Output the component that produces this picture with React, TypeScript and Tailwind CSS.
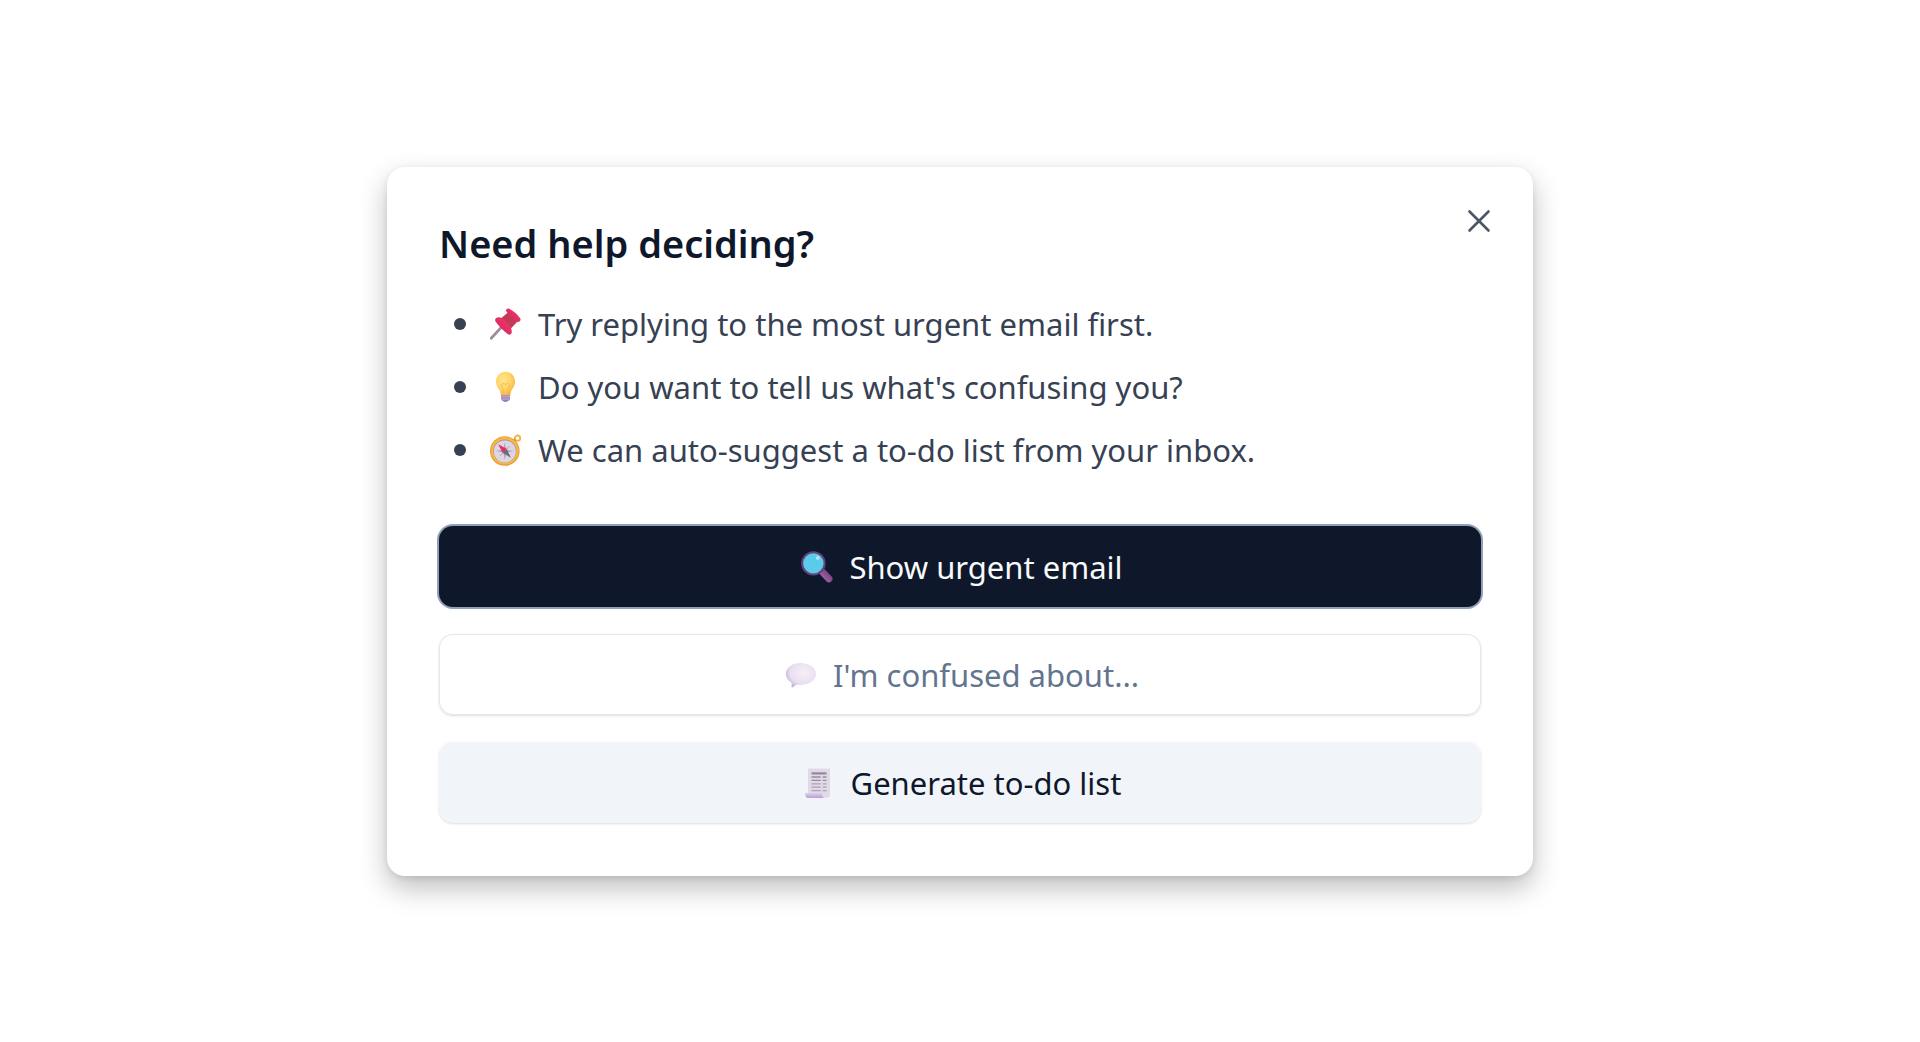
import type { ReactNode } from 'react';

function PinIcon() {
  return (
    <svg viewBox="0 0 32 32" className="size-8 shrink-0" aria-hidden="true">
      <defs>
        <linearGradient id="pin" x1="0" y1="1" x2="1" y2="0">
          <stop offset="0" stopColor="#cf2866" />
          <stop offset="1" stopColor="#fb3566" />
        </linearGradient>
      </defs>
      <path d="M1.200 30.200 11 19.600" stroke="#998da0" strokeWidth="2.800" strokeLinecap="round" />
      <path d="m9 12 9.500-8 9 9.500-8.500 9z" fill="#c13b57" />
      <path d="M19.200.8c-1.600-1.300-4 .8-3 2.500 2.500 3.500 6.200 7.700 10.700 10.400 2 1.100 4.500-1.100 3.400-3.100C27.800 6.600 23.700 3.200 19.200.8z" fill="url(#pin)" />
      <path d="M7.700 9.400c-2 .1-3.500 2.300-2 4.400 3.600 4.800 7.500 9.200 12.300 12.500 2 1.200 4-.4 3.800-2.600-.1-2.300-1-4.400-2.200-5.900-2.200-3-4.900-6.200-8-7.800-1.200-.6-2.500-.8-3.900-.6z" fill="url(#pin)" />
    </svg>
  );
}

function BulbIcon() {
  return (
    <svg viewBox="0 0 32 32" className="size-8 shrink-0" aria-hidden="true">
      <defs>
        <radialGradient id="bulb" cx=".4" cy=".35" r=".7">
          <stop offset="0" stopColor="#ffe58c" />
          <stop offset=".55" stopColor="#ffd468" />
          <stop offset="1" stopColor="#f6ae3d" />
        </radialGradient>
      </defs>
      <path d="M15.500.8C9.900.8 6 5.200 6 10.500c0 4.800 2.900 7.200 4.100 10.200.5 1.200.5 3.300 1 4.100h8.900c.5-.8.500-2.900 1-4.100 1.200-3 4-5.400 4-10.200C25 5.200 21.100.8 15.500.8z" fill="url(#bulb)" />
      <path d="M13.200 24v-6.500c-2.200-.8-2.700-4.600.1-4.900 1.700-.2 2.200 1.200 2.200 1.200s.5-1.400 2.200-1.200c2.800.3 2.300 4.100.1 4.900V24" fill="none" stroke="#f9b94c" strokeWidth="1" />
      <path d="M11 24.300h9v3.500c0 1.200-1.300 2-2.300 2.500-.8 1-3.600 1-4.400 0-1-.5-2.300-1.300-2.300-2.500z" fill="#9b80b8" />
      <path d="M11 25.800h9M11 28h8.500" stroke="#d3bfd9" strokeWidth=".8" />
    </svg>
  );
}

function CompassIcon() {
  return (
    <svg viewBox="0 0 32 32" className="size-8 shrink-0" aria-hidden="true">
      <circle cx="27.500" cy="4.200" r="2.700" fill="none" stroke="#f3b443" strokeWidth="1.800" />
      <path d="m22.500 7.800 3.200-2.200" stroke="#e69a38" strokeWidth="3" />
      <circle cx="14.800" cy="17" r="14.800" fill="#e99a35" />
      <circle cx="14.800" cy="16.700" r="13.800" fill="#f5b943" />
      <circle cx="14.800" cy="17" r="11.600" fill="#ab91a5" />
      <circle cx="14.800" cy="17.400" r="11" fill="#ddd6e1" />
      <path d="m14.800 8.200 1.300 7.600 7.600 1.300-7.600 1.300-1.300 7.600-1.300-7.600-7.600-1.300 7.600-1.300z" fill="#aaa0af" />
      <path d="m10 12.200 9.500 9.600M19.500 12.200 10 21.800" stroke="#aaa0af" strokeWidth="1" />
      <path d="m8.200 10.200 8.300 4.600-3.800 4z" fill="#e62c61" />
      <path d="m20.900 23.700-8.200-4.900 3.800-4z" fill="#71667a" />
    </svg>
  );
}

function MagnifierIcon() {
  return (
    <svg viewBox="0 0 32 32" className="size-8 shrink-0" aria-hidden="true">
      <defs>
        <linearGradient id="handle" x1="1" y1="0" x2="0" y2="1">
          <stop offset="0" stopColor="#70427f" />
          <stop offset="1" stopColor="#a463a3" />
        </linearGradient>
      </defs>
      <path d="m22 21.500 6 6.200" stroke="url(#handle)" strokeWidth="7" strokeLinecap="round" />
      <circle cx="12.400" cy="12.400" r="11.200" fill="#5bcbea" stroke="#66417f" strokeWidth="2" />
      <circle cx="16.800" cy="6.900" r="1.900" fill="#b8e4f5" />
    </svg>
  );
}

function SpeechIcon() {
  return (
    <svg viewBox="0 0 32 32" className="size-8 shrink-0" aria-hidden="true">
      <defs>
        <radialGradient id="speech" cx=".6" cy=".4" r=".65">
          <stop offset="0" stopColor="#f5f0f7" />
          <stop offset=".7" stopColor="#e9dff0" />
          <stop offset="1" stopColor="#c5b3df" />
        </radialGradient>
      </defs>
      <path d="M16 4C7.400 4 .8 8.800.8 15c0 3.500 2.100 6.600 5.500 8.500.6 1.800.4 3.200.1 4.100-.2.700.6 1 1.200.6 1.500-.8 2.900-1.800 4.100-2.800 1.400.3 2.800.4 4.300.4 8.500 0 15-4.800 15-10.800S24.500 4 16 4z" fill="url(#speech)" />
    </svg>
  );
}

function ScrollIcon() {
  return (
    <svg viewBox="0 0 32 32" className="size-8 shrink-0" aria-hidden="true">
      <defs>
        <linearGradient id="curl" x1="0" y1="0" x2="0" y2="1">
          <stop offset="0" stopColor="#ddd0e9" />
          <stop offset="1" stopColor="#b99fd6" />
        </linearGradient>
      </defs>
      <path d="m5 1 1.600 1L8.300 1l1.800 1 1.800-1 1.800 1 1.800-1 1.800 1 1.800-1 1.800 1 1.800-1 1.800 1L27 1v26.500c0 2-1 3.300-3 3.300H9L5 26z" fill="#e2d9e8" />
      <path d="M8.500 6.400h15" stroke="#90879b" strokeWidth="2.200" />
      <path d="M8.500 10h9.200M19.700 10h3.800M8.500 13.400h9.200M19.700 13.400h3.800" stroke="#968da1" strokeWidth="1.300" />
      <path d="M8.500 16.800h9.200M19.700 16.800h3.800M8.500 20.200h9.200M19.700 20.200h3.800M8.500 23.600h9.200M19.700 23.600h3.800" stroke="#aaa0b2" strokeWidth="1.300" />
      <path d="M2.200 26h16.600c0 2.600.8 4.400 2.500 5H5c-2 0-3-2-2.800-5z" fill="url(#curl)" />
    </svg>
  );
}

const tips: { icon: ReactNode; text: string }[] = [
  { icon: <PinIcon />, text: 'Try replying to the most urgent email first.' },
  { icon: <BulbIcon />, text: "Do you want to tell us what's confusing you?" },
  { icon: <CompassIcon />, text: 'We can auto-suggest a to-do list from your inbox.' },
];

const buttonBase = 'flex w-full items-center justify-center gap-4 rounded-[14px] pt-[19px] pr-8 pb-[17px] pl-9 leading-[45px]';

export default function App() {
  return (
    <main className="flex min-h-screen items-center justify-center bg-white font-['Noto_Sans',sans-serif] text-[31px]">
      <section
        role="dialog"
        aria-labelledby="help-title"
        className="relative w-full max-w-[1146px] rounded-[18px] bg-white px-[52px] py-[53px] shadow-[0_12px_28px_rgba(0,0,0,0.26),0_2px_6px_rgba(0,0,0,0.08)]"
      >
        <button type="button" aria-label="Close" className="absolute top-9 right-9 grid size-9 place-items-center text-gray-600">
          <svg viewBox="0 0 24 24" className="size-6" fill="none" stroke="currentColor" strokeWidth="2.600" strokeLinecap="round">
            <path d="m2.500 2.500 19 19M21.500 2.500l-19 19" />
          </svg>
        </button>

        <h2 id="help-title" className="text-[38px] leading-[46px] font-semibold text-slate-900">
          Need help deciding?
        </h2>

        <ul className="mt-9 space-y-[18px] pl-[15px] leading-[45px] text-gray-700">
          {tips.map((tip) => (
            <li key={tip.text} className="flex items-center gap-4">
              <span className="mr-2 size-3 shrink-0 rounded-full bg-gray-700" />
              {tip.icon}
              {tip.text}
            </li>
          ))}
        </ul>

        <div className="mt-[53px] flex flex-col gap-[27px]">
          <button type="button" className={`${buttonBase} bg-slate-900 text-slate-50 shadow-sm ring-2 ring-slate-400`}>
            <MagnifierIcon />
            Show urgent email
          </button>
          <button type="button" className={`${buttonBase} bg-white text-slate-500 shadow-sm ring-1 ring-slate-200 ring-inset`}>
            <SpeechIcon />
            I'm confused about...
          </button>
          <button type="button" className={`${buttonBase} bg-slate-100 text-slate-900 shadow-sm`}>
            <ScrollIcon />
            Generate to-do list
          </button>
        </div>
      </section>
    </main>
  );
}
